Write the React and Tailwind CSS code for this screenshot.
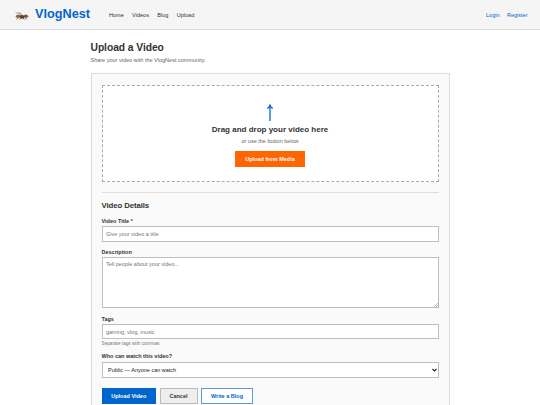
const navLinks = ['Home', 'Videos', 'Blog', 'Upload'];

function LogoMark() {
  return (
    <svg className="mt-[2px] h-[10px] w-[15px]" viewBox="0 0 15 9" preserveAspectRatio="none">
      <path d="M.8 .8 4.5 1 8 3.8 4 4.2Z" fill="#cfcfcb" />
      <path d="M3.5 .8 7 1.6 8.8 4.2 5.5 3.8Z" fill="#b9b1a8" />
      <ellipse cx="4.4" cy="5" rx="2.9" ry="1.3" fill="#8a6544" />
      <ellipse cx="8.2" cy="5.2" rx="2.4" ry="1.7" fill="#5a4129" />
      <ellipse cx="11.8" cy="4.8" rx="2" ry="1.6" fill="#89572d" />
      <path d="M4 6 2.5 7.6M7 6 5.5 8M9 6 10.5 8M10.5 5.5 13 7.5M13 4 14.5 5.5" stroke="#6b4a32" strokeWidth=".7" fill="none" />
    </svg>
  );
}

function Label({ children }) {
  return <label className="block h-[10px] text-[5.5px] leading-[10px] font-bold text-[#333]">{children}</label>;
}

const field =
  'block w-full border border-[#bfbfbf] bg-white px-[3.5px] text-[5.5px] text-[#222] outline-none placeholder:text-[#757575]';

export default function App() {
  return (
    <div className="h-[405px] w-[540px] overflow-hidden bg-white font-['Liberation_Sans',Arial,sans-serif] text-[#333]">
      <header className="flex h-[30px] items-center border-b border-[#ddd] bg-[#f5f5f5] pr-[12.5px] pl-[14px]">
        <LogoMark />
        <span className="ml-[6px] text-[12.7px] leading-[15px] font-bold text-[#0066cc]">VlogNest</span>
        <nav className="ml-[19px] flex gap-[8.3px] text-[5.55px] leading-[8px]">
          {navLinks.map((l) => (
            <a key={l}>{l}</a>
          ))}
        </nav>
        <div className="ml-auto flex gap-[7.5px] text-[5.5px] leading-[8px] text-[#0066cc]">
          <a>Login</a>
          <a>Register</a>
        </div>
      </header>

      <main className="mx-auto w-[359px] pt-[12px]">
        <h1 className="h-[12px] text-[10.3px] leading-[12px] font-bold tracking-[-0.06px]">Upload a Video</h1>
        <p className="mt-[2px] h-[8px] text-[5.5px] leading-[8px] text-[#666]">
          Share your video with the VlogNest community.
        </p>

        <section className="mt-[9px] h-[345px] border border-[#ddd] bg-[#fafafa] px-[10px] pt-[11px]">
          <div className="flex h-[97px] flex-col items-center border border-dashed border-[#aaa] bg-white pt-[17px]">
            <svg className="mt-[1px] h-[19px] w-[8px]" viewBox="0 0 8 19" fill="none" stroke="#0066cc">
              <path d="M4 1V17" strokeWidth="1.3" />
              <path d="M1.2 4.6Q3.2 3.4 4 1.2Q4.8 3.4 6.8 4.6" strokeWidth="1.2" />
            </svg>
            <h3 className="mt-[2px] h-[10px] text-[8px] leading-[10px] font-bold">Drag and drop your video here</h3>
            <p className="mt-[2px] h-[9px] text-[5.5px] leading-[8px] text-[#666]">or use the button below</p>
            <button className="mt-[4.5px] h-[16px] w-[70px] bg-[#ff6600] text-[5.5px] leading-[16px] font-bold text-white">
              Upload from Media
            </button>
          </div>

          <hr className="mt-[10px] border-t border-[#ddd]" />
          <h2 className="mt-[7px] h-[11px] text-[7.8px] leading-[11px] font-bold tracking-[-0.1px]">Video Details</h2>

          <div className="mt-[5px]">
            <Label>
              Video Title <span className="text-[#cc0000]">*</span>
            </Label>
            <input className={field + ' h-[16px]'} placeholder="Give your video a title" />
          </div>
          <div className="mt-[5px]">
            <Label>Description</Label>
            <textarea
              className={field + ' h-[51px] resize-none pt-[3px] leading-[7px]'}
              placeholder="Tell people about your video..."
            />
            <div className="relative">
              <svg className="absolute right-[1px] bottom-[1px] h-[4px] w-[4px]" viewBox="0 0 4 4">
                <path d="M0 4 4 0M2 4 4 2" stroke="#888" strokeWidth=".6" />
              </svg>
            </div>
          </div>
          <div className="mt-[6px]">
            <Label>Tags</Label>
            <input className={field + ' h-[15px]'} placeholder="gaming, vlog, music" />
            <p className="mt-[1px] h-[8px] text-[4.7px] leading-[8px] text-[#777]">Separate tags with commas.</p>
          </div>
          <div className="mt-[3px]">
            <Label>Who can watch this video?</Label>
            <div className="relative mt-[1px]">
              <select className={field + ' h-[16px] appearance-none pl-[5.5px]'}>
                <option>Public — Anyone can watch</option>
              </select>
              <svg className="absolute top-[6px] right-[2px] h-[4px] w-[5px]" viewBox="0 0 5 4">
                <path d="M.5 1 2.5 3 4.5 1" stroke="#222" strokeWidth="1.1" fill="none" />
              </svg>
            </div>
          </div>

          <div className="mt-[10px] flex text-[5.5px] leading-[14px] font-bold">
            <button className="h-[16px] w-[54.5px] bg-[#0066cc] text-white">Upload Video</button>
            <button className="ml-[3.5px] h-[16px] w-[38px] border border-[#bbb] bg-[#eee] text-[#333]">Cancel</button>
            <button className="ml-[3.5px] h-[16px] w-[52px] border border-[#5c9bdc] bg-white text-[#0066cc]">
              Write a Blog
            </button>
          </div>
        </section>
      </main>
    </div>
  );
}
